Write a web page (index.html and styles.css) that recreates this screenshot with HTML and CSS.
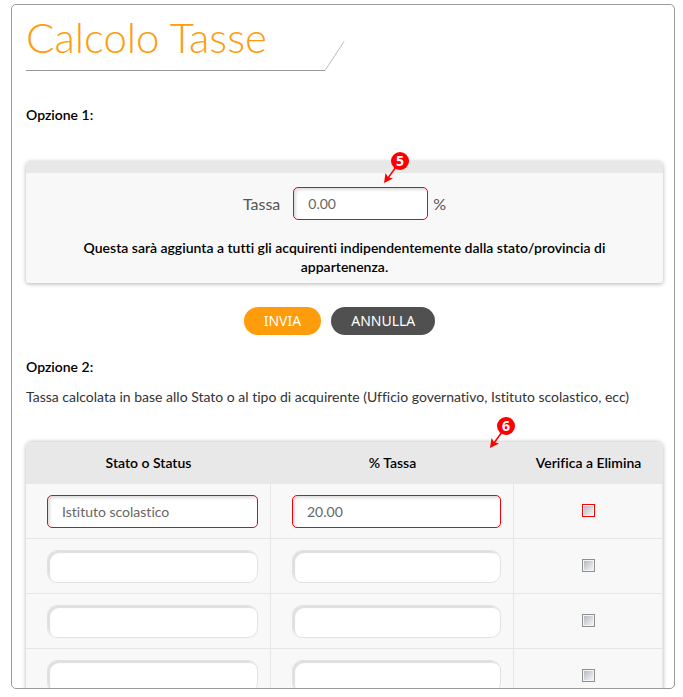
FILE: index.html
```html
<!DOCTYPE html>
<html lang="it">
<head>
<meta charset="utf-8">
<meta name="viewport" content="width=device-width, initial-scale=1">
<title>Calcolo Tasse</title>
<link rel="stylesheet" href="styles.css">
</head>
<body>
<main class="frame">
  <header class="page-head">
    <h1 class="title">Calcolo Tasse</h1>
    <svg class="slant" width="20" height="30" viewBox="0 0 20 30" aria-hidden="true"><path d="M0 29.5L19 0.5" fill="none" stroke="#bbb"/></svg>
  </header>

  <form class="option">
    <h2 class="option-title">Opzione 1:</h2>
    <div class="panel">
      <div class="tax-line">
        <label for="tax">Tassa</label>
        <span class="tax-field">
          <input class="text marked" id="tax" type="text" value="0.00">
          <svg class="callout callout-tax" width="27" height="33" viewBox="0 0 27 33"><path d="M13 16L5 27" stroke="#f00" stroke-width="1.5"/><path d="M1 32L2.5 22L5 26L10 27.500Z" fill="#f00"/><circle cx="17" cy="10" r="9" fill="#f00"/><text x="17" y="15" text-anchor="middle">5</text></svg>
        </span>
        <span>%</span>
      </div>
      <p class="note">Questa sarà aggiunta a tutti gli acquirenti indipendentemente dalla stato/provincia di appartenenza.</p>
    </div>
    <div class="actions">
      <button class="btn btn-send" type="submit">INVIA</button>
      <button class="btn btn-cancel" type="reset">ANNULLA</button>
    </div>
  </form>

  <form class="option">
    <h2 class="option-title">Opzione 2:</h2>
    <p class="intro">Tassa calcolata in base allo Stato o al tipo di acquirente (Ufficio governativo, Istituto scolastico, ecc)</p>
    <table class="rates">
      <thead>
        <tr>
          <th class="col-state" scope="col">Stato o Status</th>
          <th class="col-rate" scope="col">% Tassa
            <svg class="callout callout-rates" width="27" height="33" viewBox="0 0 27 33"><path d="M13 16L5 27" stroke="#f00" stroke-width="1.5"/><path d="M1 32L2.5 22L5 26L10 27.500Z" fill="#f00"/><circle cx="17" cy="10" r="9" fill="#f00"/><text x="17" y="15" text-anchor="middle">6</text></svg>
          </th>
          <th scope="col">Verifica a Elimina</th>
        </tr>
      </thead>
      <tbody>
        <tr>
          <td><input class="text marked" type="text" value="Istituto scolastico" aria-label="Stato o Status"></td>
          <td><input class="text marked" type="text" value="20.00" aria-label="% Tassa"></td>
          <td class="check-cell"><input class="check check-marked" type="checkbox" aria-label="Verifica a Elimina"></td>
        </tr>
        <tr>
          <td><input class="text" type="text" aria-label="Stato o Status"></td>
          <td><input class="text" type="text" aria-label="% Tassa"></td>
          <td class="check-cell"><input class="check" type="checkbox" aria-label="Verifica a Elimina"></td>
        </tr>
        <tr>
          <td><input class="text" type="text" aria-label="Stato o Status"></td>
          <td><input class="text" type="text" aria-label="% Tassa"></td>
          <td class="check-cell"><input class="check" type="checkbox" aria-label="Verifica a Elimina"></td>
        </tr>
        <tr>
          <td><input class="text" type="text" aria-label="Stato o Status"></td>
          <td><input class="text" type="text" aria-label="% Tassa"></td>
          <td class="check-cell"><input class="check" type="checkbox" aria-label="Verifica a Elimina"></td>
        </tr>
      </tbody>
    </table>
  </form>
</main>
</body>
</html>
```

FILE: styles.css
```css
* {
  box-sizing: border-box;
}

body {
  margin: 0;
  padding: 4px 8px 8px 11px;
  background: #fff;
  color: #333;
  font: 14px/20px Lato, "Open Sans", sans-serif;
  font-variant-ligatures: none;
}

h1, h2, p {
  margin: 0;
}

.frame {
  height: calc(100vh - 12px);
  padding: 0 11px 0 14px;
  border: 1px solid #999;
  border-radius: 5px;
  overflow: hidden;
}

.page-head {
  display: flex;
  align-items: flex-end;
}

.title {
  width: 47%;
  height: 66px;
  border-bottom: 1px solid #999;
  color: #ff9c0c;
  font-size: 42px;
  font-weight: 300;
  line-height: 64px;
  white-space: nowrap;
}

.slant {
  display: block;
}

.option {
  padding-top: 34px;
}

.option + .option {
  padding-top: 22px;
}

.option-title {
  color: #000;
  font-size: 14px;
  font-weight: 600;
  line-height: 20px;
}

.panel {
  margin-top: 36px;
  padding: 14px 50px 7px;
  border-top: 12px solid #e8e8e8;
  border-radius: 5px 5px 3px 3px;
  background: #f8f8f8;
  box-shadow: 0 1px 4px rgba(0, 0, 0, 0.3);
}

.tax-line {
  display: flex;
  justify-content: center;
  align-items: center;
  color: #555;
  font-size: 16px;
}

.tax-field {
  position: relative;
  width: 135px;
  margin: 0 5px 0 13px;
}

.note {
  margin-top: 18px;
  color: #000;
  font-weight: 600;
  line-height: 19px;
  text-align: center;
}

.actions {
  display: flex;
  justify-content: center;
  gap: 10px;
  margin-top: 24px;
  padding-right: 10px;
}

.btn {
  height: 28px;
  padding: 0 20px;
  border: 0;
  border-radius: 14px;
  color: #fff;
  font: 14px/28px "Noto Sans", sans-serif;
}

.btn-send {
  background: #ff9c0c;
}

.btn-cancel {
  background: #505050;
}

.intro {
  margin-top: 10px;
}

.text {
  display: block;
  width: 100%;
  height: 33px;
  padding: 0 14px;
  border: 1px solid #e2e2e2;
  border-radius: 10px;
  background: #fff;
  box-shadow: inset 2px 2px 1px #dedede;
  color: #666;
  font: inherit;
  font-size: 14px;
}

.text.marked {
  border-color: #f5000c;
  border-radius: 5px;
  box-shadow: inset 2px 2px 3px #ddd;
}

.rates {
  width: 100%;
  margin-top: 35px;
  border-collapse: separate;
  border-spacing: 0;
  border-radius: 6px;
  background: #f8f8f8;
  box-shadow: 0 0 4px rgba(0, 0, 0, 0.3);
  table-layout: fixed;
}

.rates th {
  position: relative;
  height: 42px;
  padding: 0;
  background: #e8e8e8;
  color: #000;
  font-weight: 600;
}

.rates th:first-child {
  border-top-left-radius: 6px;
}

.rates th:last-child {
  border-top-right-radius: 6px;
}

.col-state {
  width: 245px;
}

.col-rate {
  width: 243px;
}

.rates td {
  height: 55px;
  padding: 0 12px 0 21px;
  border-right: 1px solid #e6e6e6;
  border-bottom: 1px solid #e6e6e6;
}

.rates .check-cell {
  padding: 0 0 2px;
  text-align: center;
}

.check {
  appearance: none;
  display: block;
  width: 13px;
  height: 13px;
  margin: 0 auto;
  padding: 1px;
  border: 1px solid #8e8f8f;
  background: linear-gradient(135deg, #b4bac2, #f4f4f4) content-box, #f4f4f4;
}

.check-marked {
  border-color: #f00;
}

.callout {
  position: absolute;
  overflow: visible;
}

.callout-tax {
  top: -36px;
  left: 90px;
}

.callout-rates {
  top: -26px;
  right: -2px;
}

.callout text {
  fill: #fff;
  font: bold 14px "Open Sans", sans-serif;
}
```
